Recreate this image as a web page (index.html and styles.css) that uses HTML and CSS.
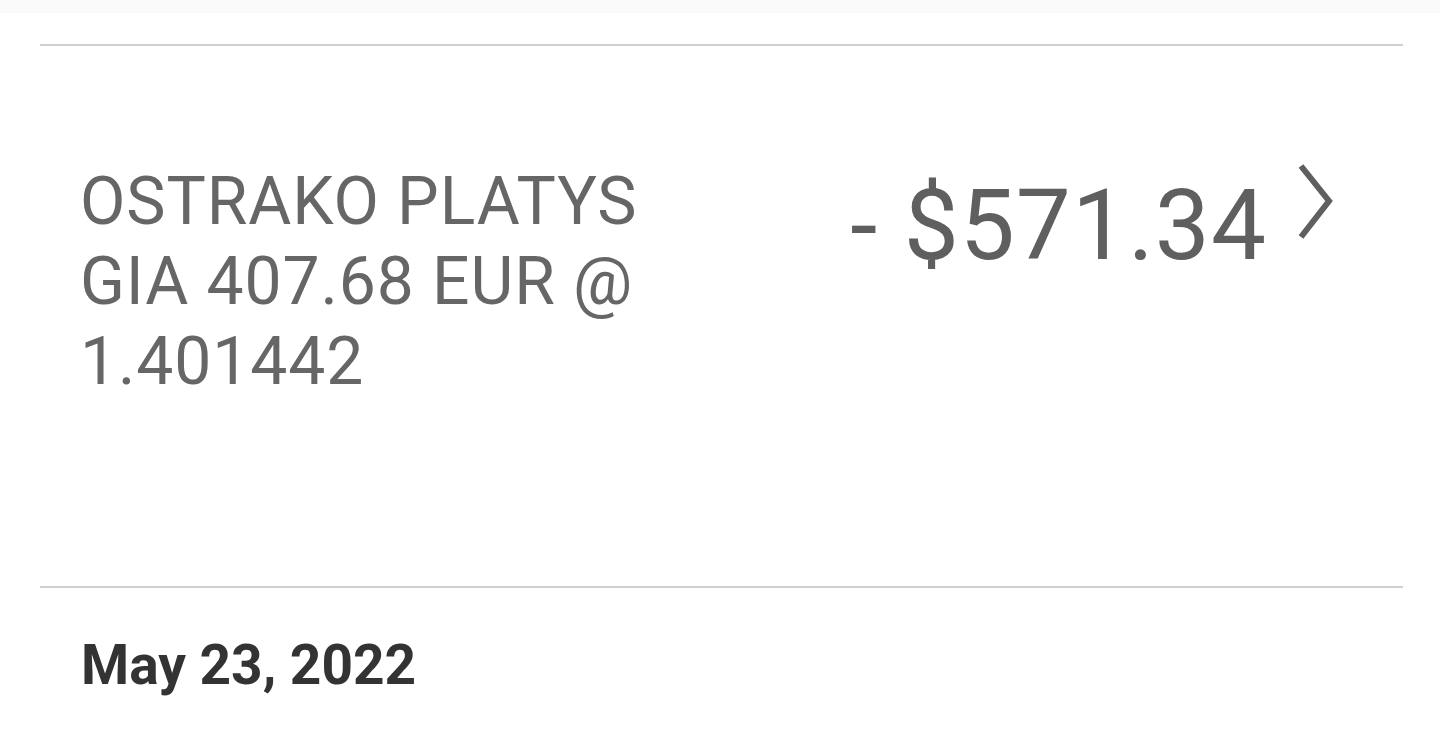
FILE: index.html
```html
<!DOCTYPE html>
<html>
<head>
<meta charset="utf-8">
<link rel="stylesheet" href="styles.css">
</head>
<body>
<div class="topband"></div>
<div class="list">
  <div class="divider"></div>
  <div class="row">
    <div class="desc">OSTRAKO PLATYS<br>GIA 407.68 EUR @<br>1.401442</div>
    <div class="right">
      <div class="amount">- $571.34</div>
      <svg class="chev" width="38" height="78" viewBox="0 0 38 78"><polyline points="4,3 32,38 4,74" fill="none" stroke="#5f5f5f" stroke-width="6"/></svg>
    </div>
  </div>
  <div class="divider"></div>
  <div class="date">May 23, 2022</div>
</div>
</body>
</html>
```
FILE: styles.css
```css
html, body {
  margin: 0;
  padding: 0;
  background: #ffffff;
  font-family: Roboto, "Liberation Sans", sans-serif;
}
.topband {
  height: 13px;
  background: #fafafa;
}
.list {
  padding: 31px 37px 0 40px;
}
.divider {
  height: 2px;
  background: #cfcfcf;
}
.row {
  display: flex;
  justify-content: space-between;
  align-items: flex-start;
  padding: 116px 68px 184px 40px;
}
.desc {
  font-size: 66px;
  line-height: 80px;
  letter-spacing: 0.9px;
  color: #666666;
}
.right {
  display: flex;
  align-items: flex-start;
  gap: 30px;
}
.amount {
  font-size: 98px;
  line-height: 98px;
  letter-spacing: 1px;
  margin-top: 15px;
  color: #5f5f5f;
}
.chev {
  display: block;
  margin-top: 1px;
}
.date {
  padding: 44px 0 0 41px;
  font-size: 55px;
  line-height: 67px;
  font-weight: 700;
  color: #333333;
}
```
